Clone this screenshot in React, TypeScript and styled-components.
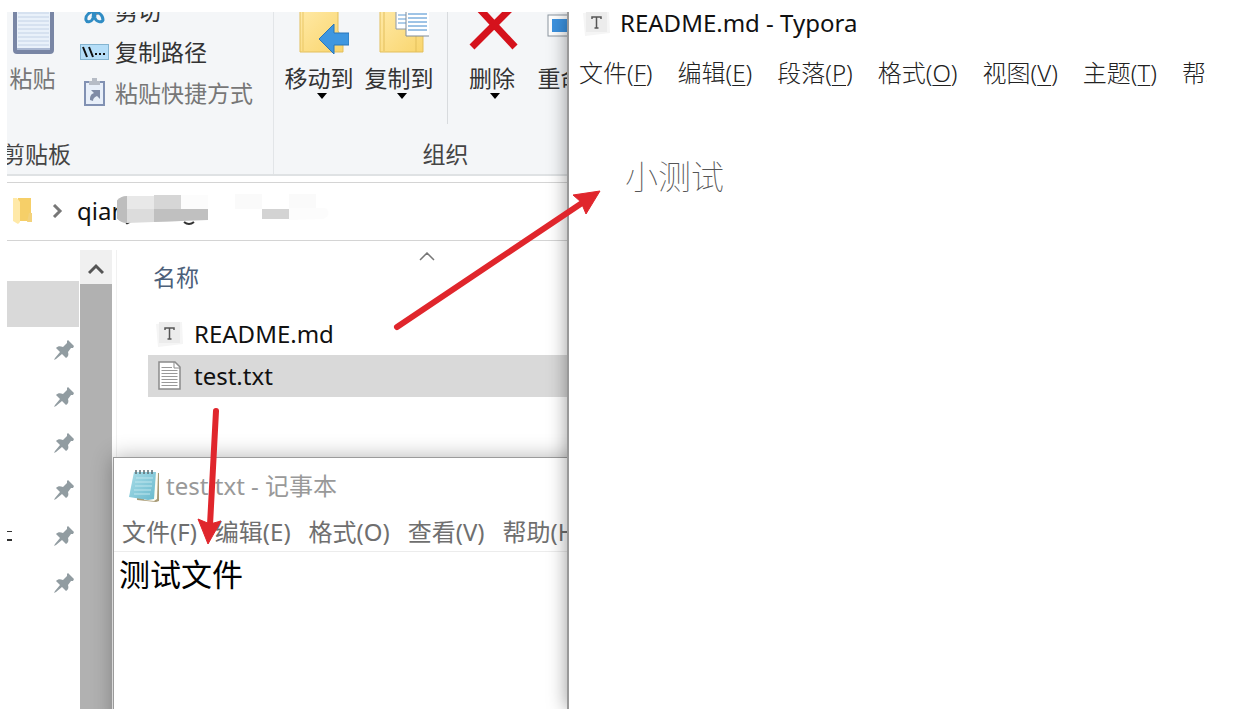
import React from "react";
import styled, { createGlobalStyle } from "styled-components";

const GlobalStyle = createGlobalStyle`
  *, *::before, *::after { box-sizing: border-box; }
  body {
    margin: 0;
    background: #fff;
    color: #222;
    font-family: "Noto Sans", "Noto Sans CJK SC", sans-serif;
    font-size: 23px;
    line-height: 24px;
  }
  button {
    border: 0;
    padding: 0;
    background: none;
    color: inherit;
    font: inherit;
    white-space: nowrap;
  }
  h1, h2, p, ul { margin: 0; padding: 0; font: inherit; }
  svg { display: block; flex: none; }
`;

const Desktop = styled.div`
  display: flex;
  min-height: 100vh;
  padding: 12px 42px 5px 7px;
`;

const Stage = styled.div`
  position: relative;
  display: flex;
  flex: 1;
  min-width: 0;
  overflow: hidden;
`;

/* ---------- Explorer ---------- */

const Explorer = styled.section`
  position: relative;
  display: flex;
  flex-direction: column;
  flex: 560 1 0;
  min-width: 0;
  overflow: hidden;
`;

const Ribbon = styled.div`
  display: flex;
  height: 164px;
  overflow: hidden;
  background: #f4f6f8;
  border-bottom: 2px solid #dfe2e4;
`;

const Group = styled.div<{ $pad?: number }>`
  display: flex;
  flex: none;
  flex-direction: column;
  padding: 0 ${(p) => p.$pad ?? 0}px;
  border-right: 1px solid #e2e5e8;
`;

const GroupTools = styled.div`
  display: flex;
  height: 122px;
`;

const GroupName = styled.div<{ $align?: string; $width?: string }>`
  display: flex;
  align-items: center;
  justify-content: ${(p) => p.$align ?? "center"};
  width: ${(p) => p.$width ?? "auto"};
  height: 39px;
  white-space: nowrap;
  color: #444;
`;

const BigTool = styled.button<{ $width: number; $muted?: boolean }>`
  display: flex;
  flex-direction: column;
  align-items: center;
  width: ${(p) => p.$width}px;
  color: ${(p) => (p.$muted ? "#777" : "#333")};
  svg:first-child { margin-bottom: 6px; }
  span { margin-bottom: 3px; }
`;

const ToolList = styled.div`
  display: flex;
  flex-direction: column;
  justify-content: flex-end;
  height: 101px;
  padding: 0 20px 0 22px;
  overflow: hidden;
`;

const SmallTool = styled.button<{ $muted?: boolean }>`
  display: flex;
  flex: none;
  align-items: center;
  gap: 5px;
  height: 41px;
  color: ${(p) => (p.$muted ? "#777" : "#333")};
`;

const Separator = styled.div`
  width: 1px;
  height: 112px;
  margin: 0 4px 0 8px;
  background: #d8dbde;
`;

const AddressBar = styled.div`
  position: relative;
  display: flex;
  align-items: center;
  height: 59px;
  margin-top: 6px;
  padding: 0 0 2px 6px;
  border-top: 1px solid #d4d4d4;
  border-bottom: 1px solid #d4d4d4;
  color: #111;
  font-size: 24px;
  svg + svg { margin: 0 14px 0 19px; }
`;

const Mosaic = styled.div`
  position: absolute;
  top: 8px;
  left: 110px;
`;

const ExplorerBody = styled.div`
  display: flex;
  flex: 1;
  min-height: 0;
  padding-top: 9px;
`;

const NavPane = styled.nav`
  width: 73px;
  padding: 31px 1px 0 0;
`;

const NavCurrent = styled.div`
  height: 46px;
  background: #d9d9d9;
`;

const PinList = styled.ul`
  display: grid;
  grid-auto-rows: 1fr;
  height: 279px;
  list-style: none;
`;

const PinRow = styled.li`
  display: flex;
  align-items: center;
  justify-content: space-between;
  padding-right: 5px;
`;

const NavStub = styled.span<{ $shown?: boolean }>`
  width: 5px;
  height: 10px;
  border: solid #333;
  border-width: ${(p) => (p.$shown ? "1px 0 2px" : "0")};
`;

const ScrollBar = styled.div`
  display: flex;
  flex-direction: column;
  width: 32px;
  background: #b1b1b1;
`;

const ScrollUp = styled.button`
  display: flex;
  align-items: center;
  justify-content: center;
  height: 34px;
  padding-top: 3px;
  background: #f0f0f0;
`;

const FilePane = styled.div`
  flex: 1;
  min-width: 0;
  margin-left: 4px;
  padding-left: 31px;
  overflow: hidden;
  border-left: 1px solid #f1f1f1;
`;

const FileTable = styled.table`
  width: 558px;
  border-collapse: collapse;
  color: #111;
  font-size: 24px;
`;

const NameHeader = styled.th`
  position: relative;
  height: 63px;
  padding: 0 0 10px 5px;
  color: #4c607a;
  font-size: 23px;
  font-weight: 400;
  text-align: left;
  svg { position: absolute; top: 2px; left: 50%; margin-left: -8px; }
`;

const FileRow = styled.tr<{ $selected?: boolean }>`
  background: ${(p) => (p.$selected ? "#d9d9d9" : "transparent")};
`;

const FileCell = styled.td`
  height: 42px;
  padding: 0 0 0 8px;
`;

const FileName = styled.div`
  display: flex;
  align-items: center;
  gap: 10px;
`;

/* ---------- Notepad ---------- */

const Notepad = styled.section`
  position: absolute;
  top: 445px;
  right: -20px;
  bottom: -20px;
  left: 106px;
  background: #fff;
  border: 1px solid #9b9b9b;
  box-shadow: 0 0 20px rgba(0, 0, 0, 0.3);
`;

const NotepadTitle = styled.header`
  display: flex;
  align-items: center;
  gap: 6px;
  height: 55px;
  padding-left: 14px;
  color: #999;
  font-size: 24px;
`;

const MenuBar = styled.div<{ $gap: number; $color: string }>`
  display: flex;
  align-items: flex-start;
  gap: ${(p) => p.$gap}px;
  color: ${(p) => p.$color};
  font-size: 24px;
  font-weight: 300;
  overflow: hidden;
  button { flex: none; }
  u { text-decoration-thickness: 1px; text-underline-offset: 3px; }
`;

const NotepadMenu = styled(MenuBar)`
  height: 39px;
  padding: 7px 0 0 8px;
  border-bottom: 1px solid #ececec;
  font-weight: 400;
`;

const NotepadText = styled.p`
  padding: 2px 5px;
  color: #000;
  font-size: 31px;
  line-height: 40px;
`;

/* ---------- Typora ---------- */

const Typora = styled.section`
  position: relative;
  flex: 638 1 0;
  min-width: 0;
  background: #fff;
  border-left: 2px solid #999;
  box-shadow: 0 0 18px rgba(0, 0, 0, 0.4);
`;

const TyporaTitle = styled.header`
  display: flex;
  align-items: center;
  gap: 9px;
  height: 21px;
  padding-left: 14px;
  color: #111;
  font-size: 24px;
`;

const TyporaMenu = styled(MenuBar)`
  height: 80px;
  padding: 28px 0 0 10px;
`;

const Document = styled.article`
  padding: 30px 56px;
`;

const Heading = styled.h1`
  color: #555;
  font-size: 33px;
  font-weight: 100;
  line-height: 68px;
`;

const Arrows = styled.svg`
  position: absolute;
  top: 0;
  left: 0;
  pointer-events: none;
`;

/* ---------- Icons ---------- */

const DropMark = () => (
  <svg width="16" height="6" viewBox="0 0 16 6"><path d="M6 0h10l-5 6z" fill="#000" /></svg>
);

const PasteIcon = () => (
  <svg width="42" height="48" viewBox="0 0 42 48">
    <rect x="3" y="-8" width="37" height="48" rx="2" fill="#e9f1fa" stroke="#7986a5" strokeWidth="4" />
    <path d="M6 1h31M6 5h31M6 9h31M6 13h31M6 17h31M6 21h31M6 25h31M6 29h31M6 33h31" stroke="#c3d2e6" />
    <path d="M5 37h33" stroke="#aab8d2" strokeWidth="2" />
  </svg>
);

const ScissorsIcon = () => (
  <svg width="30" height="30" viewBox="0 0 30 30" fill="none" stroke="#2f8cc4" strokeWidth="3">
    <path d="M8 2l9 17M22 2l-9 17" stroke="#7e8ba0" />
    <path d="M14 15c-4 1-9 4-8 9 1 3 6 2 7-2zM14 15c4 1 9 4 9 9-1 3-7 2-8-2z" />
  </svg>
);

const PathIcon = () => (
  <svg width="30" height="18" viewBox="0 0 30 18">
    <rect x="0.500" y="1.500" width="28" height="15" fill="#b5def8" stroke="#84b4d0" />
    <path d="M3 4l4 10M9 4l4 10" stroke="#111" strokeWidth="2" />
    <path d="M15 10h2v2h-2zM19 10h2v2h-2zM23 10h2v2h-2z" fill="#111" />
  </svg>
);

const ShortcutIcon = () => (
  <svg width="30" height="30" viewBox="0 0 30 30">
    <rect x="5" y="4" width="19" height="23" fill="#e8eff9" stroke="#8191b3" strokeWidth="2" />
    <path d="M9 3h3V0h5v3h3v4H9z" fill="#b6bcc6" />
    <path d="M11 12h9v9l-3-3c-3 1-4 3-4 5l-3-1c0-4 1-6 4-7z" fill="#7f8ba6" />
  </svg>
);

const MoveIcon = () => (
  <svg width="60" height="48" viewBox="-3 0 60 48">
    <defs>
      <linearGradient id="folder" x1="0" y1="0" x2="1" y2="1">
        <stop offset="0" stopColor="#ffe9a6" />
        <stop offset="1" stopColor="#f9d56d" />
      </linearGradient>
    </defs>
    <path d="M8-2h38v21l5 8v13H8z" fill="url(#folder)" stroke="#e3bf5c" />
    <path d="M11-2v41" stroke="#eac766" />
    <path d="M27 27l15-15v9h15v12H42v9z" fill="#3f97e0" stroke="#2a76b9" />
  </svg>
);

const CopyIcon = () => (
  <svg width="60" height="48" viewBox="-3 0 60 48">
    <path d="M8-2h43v42H8z" fill="url(#folder)" stroke="#e3bf5c" />
    <path d="M12-2v41M44 22v18" stroke="#e3bf5c" />
    <path d="M24-2h12v19H24z" fill="#fff" stroke="#8c99a8" />
    <path d="M26 3h8M26 7h8M26 11h8" stroke="#5f9bd3" />
    <path d="M34-2h24v26H34z" fill="#fff" stroke="#7e8b99" />
    <path d="M36 2h19M36 6h19M36 10h19M36 14h19M36 18h19" stroke="#3f88cc" />
  </svg>
);

const DeleteIcon = () => (
  <svg width="60" height="48" viewBox="0 0 60 48">
    <path d="M13-8l40 43M53-8L10 35" stroke="#d5121c" strokeWidth="7" />
  </svg>
);

const RenameIcon = () => (
  <svg width="60" height="48" viewBox="0 0 60 48">
    <rect x="6" y="3" width="52" height="21" fill="#fff" stroke="#8c969f" />
    <path d="M10 7h30v13H10z" fill="#3d93e0" />
  </svg>
);

const FolderIcon = () => (
  <svg width="20" height="28" viewBox="0 0 20 28">
    <path d="M5 1h13v23H5z" fill="#f6cf68" />
    <path d="M16 16h3v9h-5z" fill="#f3d27c" />
    <path d="M0 1h4l3 4v20l-2 2-5-3z" fill="#ffe9a8" />
  </svg>
);

const ChevronIcon = () => (
  <svg width="11" height="14" viewBox="0 0 11 14">
    <path d="M2 1l6 6-6 6" fill="none" stroke="#777" strokeWidth="3" />
  </svg>
);

const PinIcon = () => (
  <svg width="20" height="20" viewBox="0 0 20 20" fill="#919ca1">
    <path d="M14 0l6 6-1 2h-2l-3 4c1 3 0 5-2 6l-4-4-6 5-2 1 1-2 5-6-4-4c2-2 4-2 7-1l4-4V1z" />
  </svg>
);

const TyporaIcon = () => (
  <svg width="28" height="26" viewBox="0 0 28 26">
    <path d="M0 3l26-2 1 22-25 3z" fill="#f5f5f5" />
    <path d="M3 1h21v21H3z" fill="#ececec" />
    <path d="M9 9V7h9v2M13.500 7v11M11.500 18h4" fill="none" stroke="#555" strokeWidth="1.500" />
  </svg>
);

const TextIcon = () => (
  <svg width="28" height="30" viewBox="0 0 28 30">
    <path d="M3 1h16l5 5v22H3z" fill="#fff" stroke="#8b8b8b" strokeWidth="1.500" />
    <path d="M18 1v6h6" fill="none" stroke="#8b8b8b" />
    <path d="M5.500 6.500H16M5.500 9.500h16M5.500 12.500h16M5.500 15.500h16M5.500 18.500h16M5.500 21.500h16M5.500 24.500h16" stroke="#999" />
  </svg>
);

const NotepadIcon = () => (
  <svg width="32" height="34" viewBox="0 0 32 34">
    <defs>
      <linearGradient id="cover" x1="0" y1="0" x2="1" y2="1">
        <stop offset="0" stopColor="#a9dde8" />
        <stop offset="1" stopColor="#69b9cd" />
      </linearGradient>
    </defs>
    <path d="M9 4h22v28l-3 1-19-2z" fill="#a89a75" />
    <path d="M26 4h4l-1 26-3 2-10-1z" fill="#fffdf2" />
    <path d="M6 3h22l-2 27-6 1-19-3z" fill="url(#cover)" />
    <path d="M8 9h17M7 13h17M7 17h17M6 21h17M6 25h16" stroke="#bfe6ee" />
    <path d="M8 1v4M12 1v4M16 1v4M20 1v4M24 1v4" stroke="#5c6b70" strokeWidth="1.500" />
  </svg>
);

const typoraMenus = [
  ["文件", "F"], ["编辑", "E"], ["段落", "P"], ["格式", "O"], ["视图", "V"], ["主题", "T"], ["帮助", "H"],
];
const notepadMenus = ["文件(F)", "编辑(E)", "格式(O)", "查看(V)", "帮助(H)"];

export default function App() {
  return (
    <Desktop>
      <GlobalStyle />
      <Stage>
        <Explorer>
          <Ribbon>
            <Group>
              <GroupTools>
                <BigTool $width={51} $muted><PasteIcon /><span>粘贴</span></BigTool>
                <ToolList>
                  <SmallTool><ScissorsIcon />剪切</SmallTool>
                  <SmallTool><PathIcon />复制路径</SmallTool>
                  <SmallTool $muted><ShortcutIcon />粘贴快捷方式</SmallTool>
                </ToolList>
              </GroupTools>
              <GroupName $align="flex-end" $width="64px">剪贴板</GroupName>
            </Group>
            <Group $pad={5}>
              <GroupTools>
                <BigTool $width={80}><MoveIcon /><span>移动到</span><DropMark /></BigTool>
                <BigTool $width={80}><CopyIcon /><span>复制到</span><DropMark /></BigTool>
                <Separator />
                <BigTool $width={80}><DeleteIcon /><span>删除</span><DropMark /></BigTool>
                <BigTool $width={80}><RenameIcon /><span>重命名</span></BigTool>
              </GroupTools>
              <GroupName>组织</GroupName>
            </Group>
          </Ribbon>
          <AddressBar>
            <FolderIcon />
            <ChevronIcon />
            <span>qian</span>
            <Mosaic>
              <svg width="216" height="40" viewBox="0 0 216 40">
                <path d="M13 30q-1 3-4 2M77 31q-5 4-10 0" fill="none" stroke="#333" strokeWidth="2" />
                <path d="M10 5h54v25l-54 2a13 13 0 0 1 0-27z" fill="#dcdcdc" />
                <path d="M10 5v27a13 13 0 0 1 0-27z" fill="#bdbdbd" />
                <path d="M10 5h27v13H10z" fill="#e8e8e8" />
                <path d="M37 4h27v15H37z" fill="#d6d6d6" />
                <path d="M37 18h54v11l-54 2z" fill="#c0c0c0" />
                <path d="M64 4h27v14H64z" fill="#fcfcfc" />
                <path d="M118 3h27v15h-27zM172 3h27v14h-27z" fill="#fafafa" />
                <path d="M145 18h27v10h-27z" fill="#d3d3d3" />
                <path d="M172 17h36q8 6-2 11l-34 1z" fill="#fcfcfc" />
              </svg>
            </Mosaic>
          </AddressBar>
          <ExplorerBody>
            <NavPane>
              <NavCurrent />
              <PinList>
                {[0, 1, 2, 3, 4, 5].map((i) => (
                  <PinRow key={i}><NavStub $shown={i === 4} /><PinIcon /></PinRow>
                ))}
              </PinList>
            </NavPane>
            <ScrollBar>
              <ScrollUp aria-label="Scroll up">
                <svg width="16" height="14" viewBox="0 0 16 14">
                  <path d="M1 11l7-7 7 7" fill="none" stroke="#555" strokeWidth="3" />
                </svg>
              </ScrollUp>
            </ScrollBar>
            <FilePane>
              <FileTable>
                <thead>
                  <tr>
                    <NameHeader>
                      名称
                      <svg width="16" height="9" viewBox="0 0 16 9">
                        <path d="M1 8l7-7 7 7" fill="none" stroke="#777" strokeWidth="1.500" />
                      </svg>
                    </NameHeader>
                  </tr>
                </thead>
                <tbody>
                  <FileRow><FileCell><FileName><TyporaIcon />README.md</FileName></FileCell></FileRow>
                  <FileRow $selected><FileCell><FileName><TextIcon />test.txt</FileName></FileCell></FileRow>
                </tbody>
              </FileTable>
            </FilePane>
          </ExplorerBody>
          <Notepad>
            <NotepadTitle><NotepadIcon />test.txt - 记事本</NotepadTitle>
            <NotepadMenu $gap={18} $color="#6f6f6f">
              {notepadMenus.map((m) => <button key={m}>{m}</button>)}
            </NotepadMenu>
            <NotepadText>测试文件</NotepadText>
          </Notepad>
        </Explorer>
        <Typora>
          <TyporaTitle><TyporaIcon />README.md - Typora</TyporaTitle>
          <TyporaMenu $gap={25} $color="#222">
            {typoraMenus.map(([name, key]) => (
              <button key={key}>{name}(<u>{key}</u>)</button>
            ))}
          </TyporaMenu>
          <Document><Heading>小测试</Heading></Document>
        </Typora>
        <Arrows width="640" height="560" viewBox="7 12 640 560" fill="#e0262c" stroke="#e0262c">
          <path d="M397 327L582 203M216 411l-6 114" strokeWidth="6" strokeLinecap="round" />
          <path d="M600 191l-27 4 8 7 5 12zM208 544l-10-25 12 5 11-3z" strokeWidth="1" />
        </Arrows>
      </Stage>
    </Desktop>
  );
}
